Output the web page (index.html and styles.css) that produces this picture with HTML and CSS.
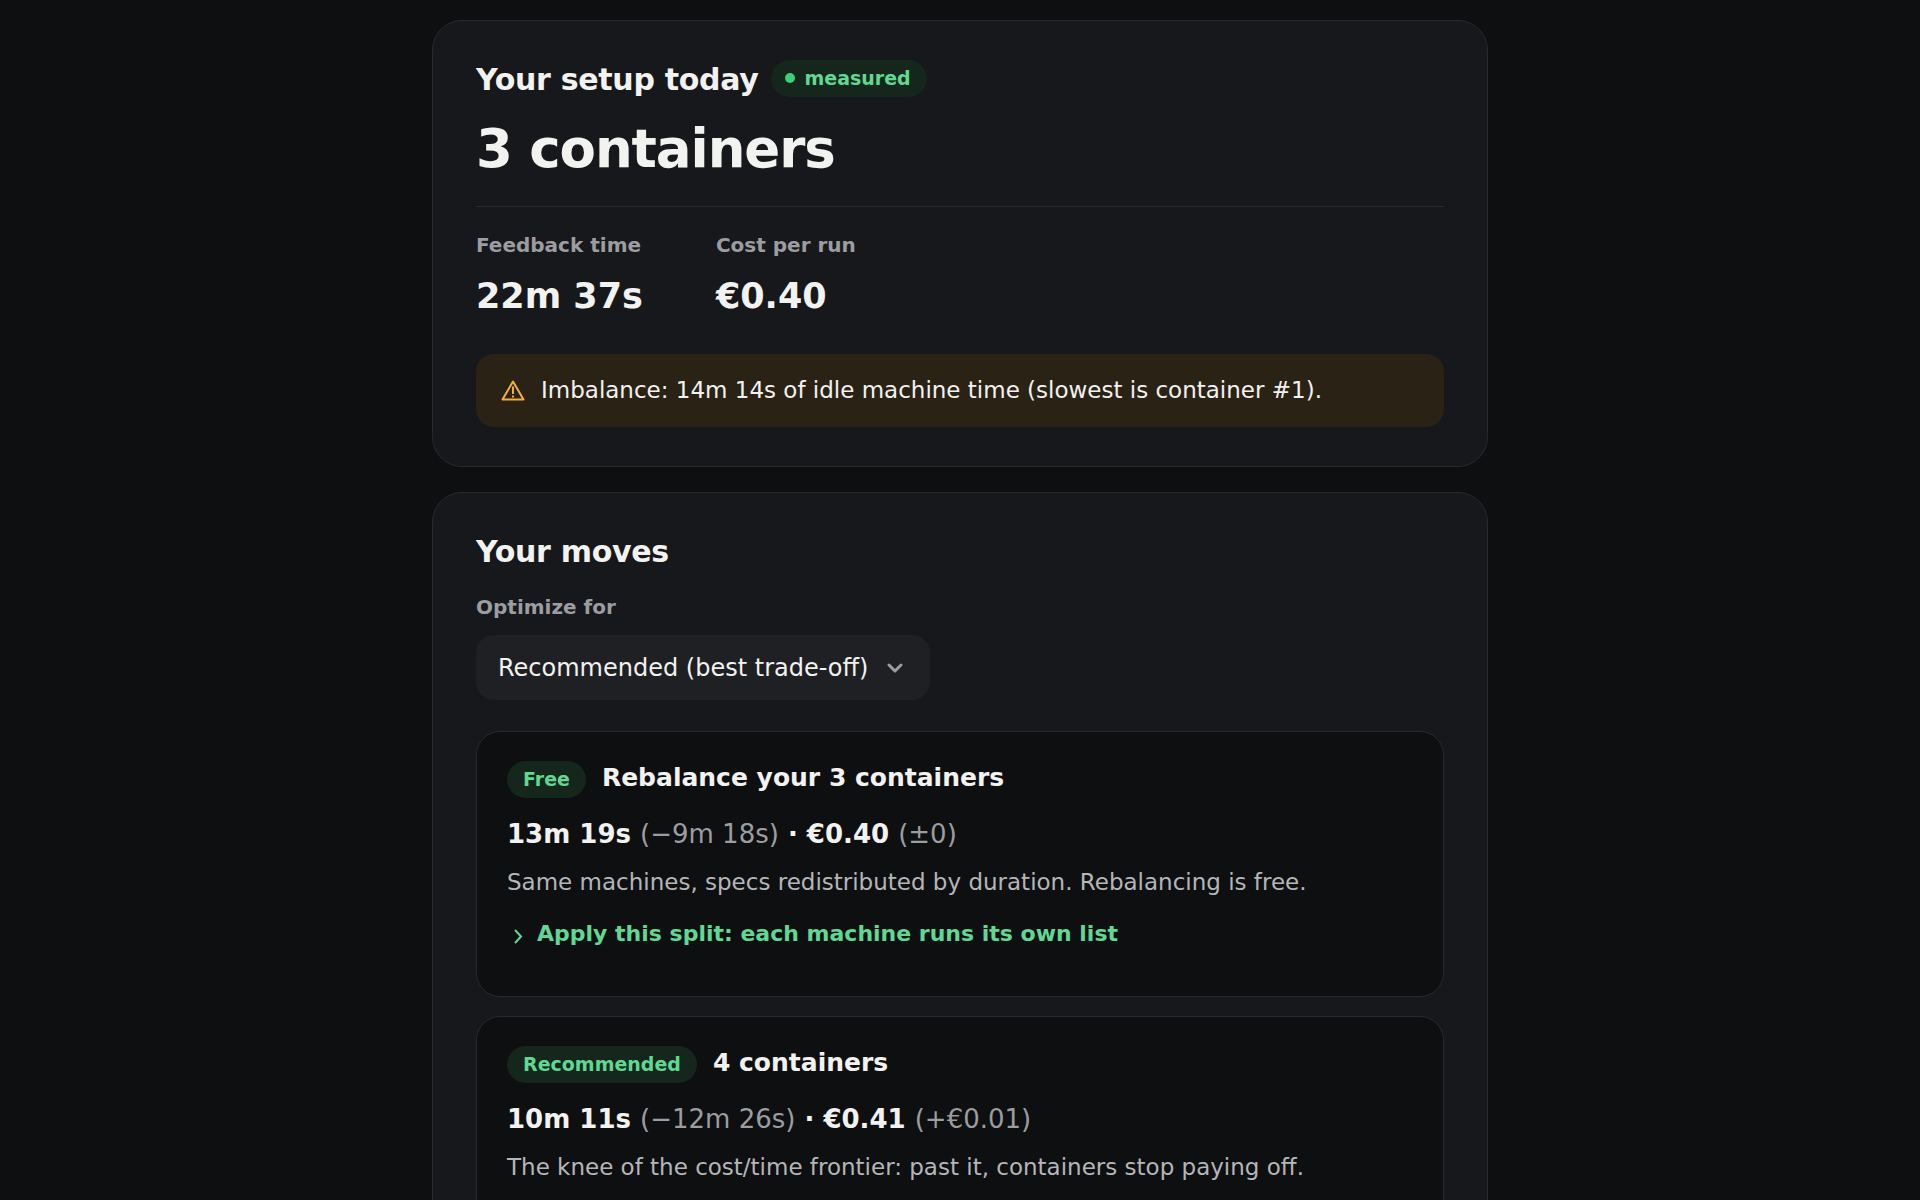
FILE: index.html
```
<!DOCTYPE html>
<html lang="en">
<head>
    <meta charset="UTF-8">
    <meta name="viewport" content="width=device-width, initial-scale=1.0">
    <title>Your setup today</title>
    <link rel="stylesheet" href="styles.css">
</head>
<body>
    <main class="page">
        <section class="card">
            <div class="card-header">
                <h2 class="card-title">Your setup today</h2>
                <span class="pill"><span class="pill-dot"></span>measured</span>
            </div>
            <p class="headline">3 containers</p>

            <dl class="stats">
                <div class="stat">
                    <dt class="label">Feedback time</dt>
                    <dd class="stat-value">22m 37s</dd>
                </div>
                <div class="stat">
                    <dt class="label">Cost per run</dt>
                    <dd class="stat-value">€0.40</dd>
                </div>
            </dl>

            <div class="notice">
                <svg class="notice-icon" viewBox="0 0 24 24" fill="none" stroke="currentColor" stroke-width="2" stroke-linejoin="round" aria-hidden="true">
                    <path d="M12 2.5 22.5 20.5H1.5Z"/>
                    <path d="M12 7.5v7.5M12 16.5v2"/>
                </svg>
                <p class="notice-text">Imbalance: 14m 14s of idle machine time (slowest is container #1).</p>
            </div>
        </section>

        <section class="card">
            <div class="card-header">
                <h2 class="card-title">Your moves</h2>
            </div>
            <div class="field">
                <label class="label" for="optimize">Optimize for</label>
                <div class="select-wrap">
                    <select class="select" id="optimize">
                        <option>Recommended (best trade-off)</option>
                    </select>
                    <svg class="select-arrow" viewBox="0 0 16 16" fill="none" stroke="currentColor" stroke-width="3" stroke-linecap="round" stroke-linejoin="round" aria-hidden="true">
                        <path d="M2 5l6 6 6-6"/>
                    </svg>
                </div>
            </div>

            <div class="moves">
                <article class="move">
                    <div class="move-header">
                        <span class="pill">Free</span>
                        <h3 class="move-title">Rebalance your 3 containers</h3>
                    </div>
                    <p class="move-numbers">13m 19s <span class="delta">(−9m 18s)</span> · €0.40 <span class="delta">(±0)</span></p>
                    <p class="move-text">Same machines, specs redistributed by duration. Rebalancing is free.</p>
                    <details class="move-details">
                        <summary class="move-summary">
                            <svg class="chevron" viewBox="0 0 20 24" fill="none" stroke="currentColor" stroke-width="2" aria-hidden="true">
                                <path d="M8 8l6 6.5-6 6.5"/>
                            </svg>
                            Apply this split: each machine runs its own list
                        </summary>
                    </details>
                </article>

                <article class="move">
                    <div class="move-header">
                        <span class="pill">Recommended</span>
                        <h3 class="move-title">4 containers</h3>
                    </div>
                    <p class="move-numbers">10m 11s <span class="delta">(−12m 26s)</span> · €0.41 <span class="delta">(+€0.01)</span></p>
                    <p class="move-text">The knee of the cost/time frontier: past it, containers stop paying off.</p>
                    <details class="move-details">
                        <summary class="move-summary">
                            <svg class="chevron" viewBox="0 0 20 24" fill="none" stroke="currentColor" stroke-width="2" aria-hidden="true">
                                <path d="M8 8l6 6.5-6 6.5"/>
                            </svg>
                            Apply this split: each machine runs its own list
                        </summary>
                    </details>
                </article>
            </div>
        </section>
    </main>
</body>
</html>
```
FILE: styles.css
```
* {
    box-sizing: border-box;
}

body {
    margin: 0;
    font-family: "DejaVu Sans", sans-serif;
    background-color: #0e0f11;
    color: #f2f2f0;
}

h2, h3, p, dl, dd {
    margin: 0;
}

.page {
    display: flex;
    flex-direction: column;
    gap: 25px;
    max-width: 1056px;
    margin: 0 auto;
    padding: 20px 0;
}

.card {
    padding: 39px 43px;
    background-color: #17181b;
    border: 1px solid #28292c;
    border-radius: 30px;
}

.card-header {
    display: flex;
    align-items: flex-start;
    gap: 12px;
}

.card-title {
    font-size: 30px;
    line-height: 40px;
    letter-spacing: -0.01em;
}

.pill {
    display: inline-flex;
    align-items: center;
    gap: 10px;
    height: 37px;
    padding: 0 16px 2px;
    background-color: #15261c;
    border-radius: 999px;
    color: #5fd893;
    font-size: 19px;
    font-weight: bold;
}

.card-header .pill {
    padding-left: 14px;
}

.pill-dot {
    width: 10px;
    height: 10px;
    background-color: #3ecf7c;
    border-radius: 50%;
}

.headline {
    margin-top: 17px;
    padding-bottom: 25px;
    border-bottom: 1px solid #28292c;
    font-size: 53px;
    font-weight: bold;
    line-height: 64px;
    letter-spacing: -0.02em;
}

.stats {
    display: flex;
    flex-wrap: wrap;
    gap: 73px;
    margin-top: 23px;
}

.label {
    color: #9b9da0;
    font-size: 20px;
    font-weight: bold;
    line-height: 30px;
}

.stat-value {
    margin-top: 14px;
    font-size: 35px;
    font-weight: bold;
    line-height: 44px;
}

.notice {
    display: flex;
    align-items: center;
    gap: 16px;
    margin-top: 36px;
    padding: 18px 25px;
    background-color: #2a2215;
    border-radius: 18px;
}

.notice-icon {
    flex: none;
    width: 24px;
    height: 24px;
    color: #f0ae40;
}

.notice-text {
    font-size: 23px;
    line-height: 37px;
}

.field {
    display: flex;
    flex-direction: column;
    align-items: flex-start;
    gap: 13px;
    margin-top: 20px;
}

.select-wrap {
    position: relative;
}

.select {
    appearance: none;
    height: 65px;
    padding: 0 61px 0 22px;
    background-color: #1f2023;
    border: 0;
    border-radius: 18px;
    color: #f2f2f0;
    font-family: inherit;
    font-size: 24px;
}

.select-arrow {
    position: absolute;
    top: 25px;
    right: 27px;
    width: 16px;
    height: 16px;
    color: #9b9da0;
    pointer-events: none;
}

.moves {
    display: flex;
    flex-direction: column;
    gap: 19px;
    margin-top: 31px;
}

.move {
    padding: 29px 30px;
    background-color: #0e0f11;
    border: 1px solid #28292c;
    border-radius: 24px;
}

.move-header {
    display: flex;
    align-items: flex-start;
    gap: 16px;
}

.move-title {
    font-size: 25px;
    line-height: 34px;
}

.move-numbers {
    margin-top: 16px;
    font-size: 26px;
    font-weight: bold;
    line-height: 40px;
}

.delta {
    color: #9b9da0;
    font-weight: normal;
}

.move-text {
    margin-top: 10px;
    color: #b4b6b8;
    font-size: 23px;
    line-height: 36px;
}

.move-details {
    margin: 16px 0 15px;
}

.move-summary {
    display: flex;
    align-items: center;
    gap: 10px;
    color: #5fd893;
    font-size: 22px;
    font-weight: bold;
    line-height: 36px;
    list-style: none;
    cursor: pointer;
}

.chevron {
    flex: none;
    width: 20px;
    height: 24px;
}

.move-details[open] .chevron {
    transform: rotate(90deg);
}
```
